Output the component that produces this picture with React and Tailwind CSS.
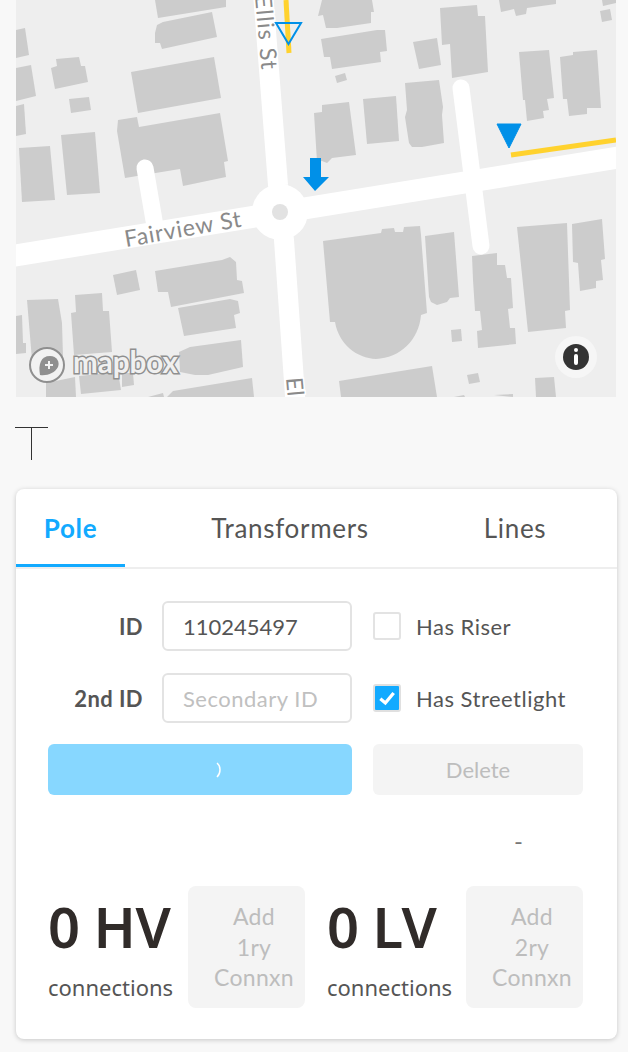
import React from "react";

const font = { fontFamily: "Lato, sans-serif" };

// Huellas de edificios del mapa (coordenadas de página)
const buildings = [
  "155,0 226,0 226,7 158,18",
  "157,25 163,22 212,12 217,37 162,49 160,43 155,43 155,33",
  "131,72 214,57 221,98 138,113",
  "118,120 137,117 139,127 220,113 228,161 224,162 226,177 183,186 180,169 125,178 117,131",
  "16,30 25,28 29,55 16,58",
  "16,68 31,65 36,96 16,101",
  "16,106 24,104 26,134 16,136",
  "19,148 50,146 55,200 22,202",
  "61,135 95,132 100,193 67,195",
  "51,68 57,66 56,59 79,57 81,66 85,66 88,82 55,89",
  "69,99 89,97 91,110 71,113",
  "322,0 372,0 374,12 371,12 371,23 337,28 326,28 323,15 318,16",
  "321,39 377,30 385,30 387,51 380,52 381,62 332,69 330,57 324,57",
  "335,76 345,73 347,80 337,83",
  "413,42 437,38 441,65 419,69",
  "440,8 477,5 478,16 485,16 488,72 452,78 450,44 442,45",
  "499,0 556,0 556,4 527,8 526,14 516,16 514,9 501,12",
  "602,0 616,0 616,3 603,6",
  "600,11 610,9 612,20 602,22",
  "519,52 549,50 554,98 547,99 549,110 543,111 544,118 527,121 525,100 523,100",
  "560,57 573,55 573,52 597,50 601,108 587,108 587,114 569,116 567,99 563,99",
  "405,83 439,80 443,107 442,115 444,143 422,147 412,147 409,143 405,117 407,110",
  "363,99 396,96 399,141 367,144",
  "314,113 322,112 322,105 349,102 356,155 332,158 327,163 322,161 317,162",
  "425,236 454,232 459,297 450,298 447,302 437,305 431,302 429,297",
  "472,256 497,253 497,265 505,265 507,278 511,278 513,308 508,309 510,328 515,328 516,344 478,348 477,331 482,330 480,311 475,311 473,280",
  "517,227 567,223 570,310 565,311 566,328 528,332",
  "572,224 602,219 605,259 601,260 603,280 596,281 596,288 580,291 578,263 573,262",
  "451,330 461,329 462,341 452,342",
  "467,375 478,373 480,382 469,384",
  "535,378 554,377 556,397 536,397",
  "339,381 432,366 437,397 341,397",
  "454,397 464,395 465,397",
  "494,395 513,394 513,397",
  "113,275 136,270 140,290 117,295",
  "155,271 222,260 230,257 236,262 237,280 242,281 244,293 171,307 168,292 158,292",
  "178,308 230,299 238,301 240,313 234,315 236,328 184,336",
  "179,352 190,347 241,340 243,367 208,375 195,375 180,372",
  "167,397 173,391 252,378 254,397",
  "148,397 163,393 164,397",
  "122,373 133,373 134,385 122,387",
  "79,376 118,372 121,390 81,394",
  "46,383 75,377 76,397 46,397",
  "27,300 58,299 62,323 63,357 32,360",
  "75,295 102,293 103,311 109,311 112,352 74,355 71,313 76,312",
  "16,316 22,315 23,343 26,343 26,353 16,354",
];

function MapView() {
  return (
    <svg viewBox="16 0 600 397" className="block w-[600px] h-[397px] bg-[#eeeeee]">
      {buildings.map((points) => (
        <polygon key={points} points={points} fill="#cccccc" />
      ))}
      {/* Estadio */}
      <path
        d="M323 241 L381 233 L382 229 L394 228 L395 232 L403 232 L404 227 L420 226 L421 235 L427 313 L421 315 C419 340 400 358 376 359 C357 358 339 345 335 322 L330 322 Z"
        fill="#cccccc"
      />

      {/* Calles */}
      <g fill="none" stroke="#ffffff" strokeLinecap="round" strokeLinejoin="round">
        <path d="M262 -20 L278 185 L284 240 L296 410" strokeWidth="20" />
        <path d="M0 258 L640 154" strokeWidth="22" />
        <path d="M145 168 L156 232" strokeWidth="17" />
        <path d="M461 88 L481 246" strokeWidth="17" />
      </g>
      <circle cx="280" cy="212" r="28" fill="#ffffff" />
      <circle cx="280" cy="212" r="8" fill="#e2e2e2" />

      {/* Nombres de calles */}
      <g
        fill="#8a8a8a"
        stroke="#ffffff"
        strokeWidth="3"
        fontFamily="Lato, sans-serif"
        fontSize="23"
        style={{ paintOrder: "stroke" }}
      >
        <text x="126" y="247" transform="rotate(-10 126 247)" textLength="118">Fairview St</text>
        <text x="255" y="-4" transform="rotate(85 255 -4)" textLength="74">Ellis St</text>
        <text x="286" y="378" transform="rotate(85 286 378)">El</text>
      </g>

      {/* Líneas y marcadores */}
      <path d="M286 0 L289 53" stroke="#ffd22e" strokeWidth="5" fill="none" />
      <path d="M511 155 L616 140" stroke="#ffd22e" strokeWidth="5" fill="none" />
      <polygon points="276,23 301,23 288.5,44" fill="none" stroke="#0090e8" strokeWidth="2" />
      <polygon points="497,124 521,124 509,148" fill="#0090e8" stroke="#0090e8" strokeWidth="1" strokeLinejoin="round" />
      <polygon points="310,158 321,158 321,177 329,177 315,191 303,177 310,177" fill="#0090e8" />

      {/* Logo mapbox */}
      <circle cx="47" cy="365" r="17" fill="#f2f2f2" stroke="#8f8f8f" strokeWidth="2" />
      <path d="M40 375 C38 364 41 356 50 356 C57 356 60 362 58 367 C55 373 47 376 40 375 Z" fill="#8f8f8f" />
      <path d="M49 361 V369 M45 365 H53" stroke="#f2f2f2" strokeWidth="2" />
      <text
        x="73"
        y="373"
        fontFamily="Lato, sans-serif"
        fontWeight="700"
        fontSize="31"
        textLength="105"
        lengthAdjust="spacingAndGlyphs"
        fill="#f0f0f0"
        stroke="#8f8f8f"
        strokeWidth="3"
        style={{ paintOrder: "stroke" }}
      >
        mapbox
      </text>

      {/* Botón de información */}
      <circle cx="576" cy="357" r="21" fill="#f6f6f6" />
      <circle cx="576" cy="357" r="13" fill="#333333" />
      <circle cx="576" cy="350" r="2" fill="#ffffff" />
      <rect x="574" y="354" width="4" height="11" rx="2" fill="#ffffff" />
    </svg>
  );
}

function Tab({ label, active, className }) {
  return (
    <div
      className={`flex items-center justify-center h-full text-[26px] tracking-[0.7px] ${
        active ? "font-bold text-[#12aaff] border-b-[3px] border-[#12aaff] pt-[3px]" : "text-[#555555]"
      } ${className}`}
    >
      {label}
    </div>
  );
}

function Field({ label, value, placeholder }) {
  return (
    <div className="flex items-center gap-[19px]">
      <span className="w-[95px] text-right text-[22px] tracking-[0.4px] font-bold text-[#555555]">{label}</span>
      <div
        className={`w-[190px] h-[50px] flex items-center px-[19px] border-2 border-[#e3e3e3] rounded-md text-[22px] ${
          value ? "text-[#555555]" : "text-[#c0c0c0] tracking-[0.5px]"
        }`}
      >
        {value || placeholder}
      </div>
    </div>
  );
}

function CheckRow({ label, checked }) {
  return (
    <div className="flex items-center h-[28px] gap-[15px] text-[22px] tracking-[0.5px] text-[#555555]">
      {checked ? (
        <div className="w-[28px] h-[28px] flex items-center justify-center rounded-[3px] border-2 border-[#e0e0e0] bg-[#12aaff]">
          <svg viewBox="0 0 24 24" className="w-[20px] h-[20px]" fill="none" stroke="#ffffff" strokeWidth="4">
            <path d="M4 13 L10 18 L20 6" />
          </svg>
        </div>
      ) : (
        <div className="w-[28px] h-[28px] rounded-[3px] border-2 border-[#e3e3e3] bg-white" />
      )}
      <span>{label}</span>
    </div>
  );
}

function Connections({ count, className }) {
  return (
    <div className={`flex flex-col ${className}`} style={{ fontFamily: '"Noto Sans", sans-serif' }}>
      <span className="text-[56px] leading-[64px] font-semibold tracking-[-0.5px] text-[#302b29]">{count}</span>
      <span className="mt-[14px] text-[22px] leading-[30px] text-[#555555]">connections</span>
    </div>
  );
}

function AddButton({ lines }) {
  return (
    <div className="w-[117px] h-[122px] flex flex-col items-center justify-center rounded-lg bg-[#f4f4f4] text-[23px] tracking-[0.3px] leading-[30.5px] text-[#bdbdbd] pl-[15px]">
      {lines.map((line) => (
        <span key={line}>{line}</span>
      ))}
    </div>
  );
}

export default function App() {
  return (
    <div className="h-[1052px] overflow-hidden bg-[#f8f8f8] px-4" style={font}>
      <MapView />

      {/* Indicador de texto */}
      <div className="h-[92px] pt-[30px]">
        <div className="w-[33px] h-[33px] -ml-px flex flex-col items-center">
          <div className="w-full h-px bg-[#333333]" />
          <div className="w-px flex-1 bg-[#333333]" />
        </div>
      </div>

      {/* Tarjeta */}
      <div className="w-[601px] h-[550px] rounded-lg bg-white shadow-[0_1px_5px_rgba(0,0,0,0.2)]">
        <div className="flex items-center h-[80px] border-b-2 border-[#eeeeee]">
          <Tab label="Pole" active className="w-[109px]" />
          <Tab label="Transformers" className="w-[220px] ml-[55px]" />
          <Tab label="Lines" className="w-[120px] ml-[55px]" />
        </div>

        <div className="px-8 pt-[32px]">
          <div className="flex gap-[21px]">
            <div className="flex flex-col gap-[22px]">
              <Field label="ID" value="110245497" />
              <Field label="2nd ID" placeholder="Secondary ID" />
            </div>
            <div className="flex flex-col gap-[44px] pt-[11px]">
              <CheckRow label="Has Riser" />
              <CheckRow label="Has Streetlight" checked />
            </div>
          </div>

          <div className="flex gap-[21px] mt-[21px]">
            <div className="w-[304px] h-[51px] flex items-center justify-center rounded-md bg-[#87d7ff]">
              <svg viewBox="0 0 10 16" className="w-[10px] h-[16px] ml-[38px]" fill="none" stroke="#ffffff" strokeWidth="1.5">
                <path d="M3 1 C7 4 7 11 3 15" />
              </svg>
            </div>
            <div className="w-[210px] h-[51px] flex items-center justify-center rounded-md bg-[#f4f4f4] text-[22px] text-[#bdbdbd]">
              Delete
            </div>
          </div>

          <div className="h-[91px] flex justify-end items-center pr-[62px] text-[24px] text-[#777777]">-</div>

          <div className="flex">
            <Connections count="0 HV" className="w-[140px] pt-[8px]" />
            <AddButton lines={["Add", "1ry", "Connxn"]} />
            <Connections count="0 LV" className="w-[139px] ml-[22px] pt-[8px]" />
            <AddButton lines={["Add", "2ry", "Connxn"]} />
          </div>
        </div>
      </div>
    </div>
  );
}
